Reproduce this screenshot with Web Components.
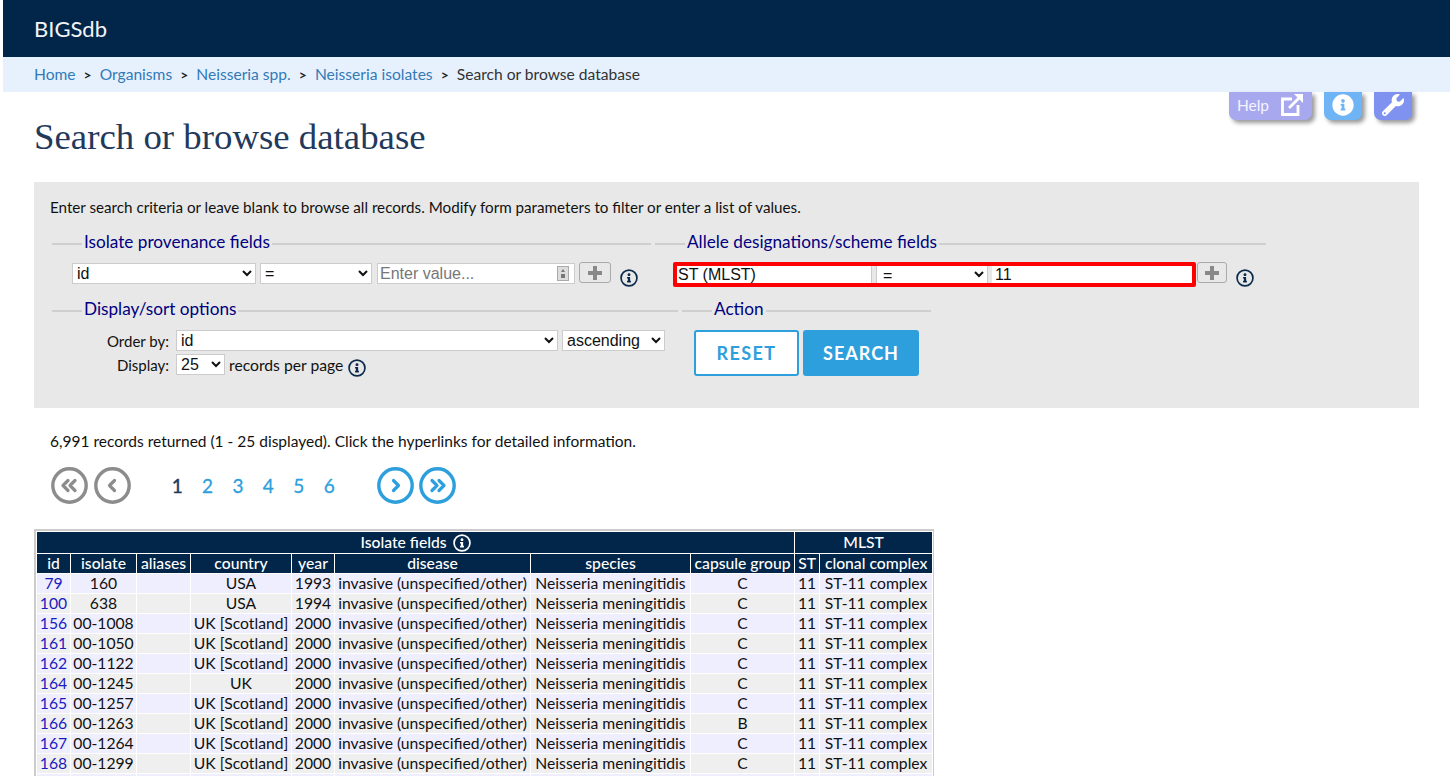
<!DOCTYPE html>
<html lang="en">
<head>
<meta charset="utf-8">
<title>Search or browse database</title>
<style>
  html, body { margin: 0; padding: 0; background: #fff; }
  body { padding: 0 3px; font: 15px Lato, "Noto Sans", sans-serif; color: #111; overflow: hidden; height: 776px; box-sizing: border-box; }
</style>
</head>
<body>
<site-header>BIGSdb</site-header>
<bread-crumbs></bread-crumbs>
<page-main>
  <quick-links></quick-links>
  <h1>Search or browse database</h1>
  <search-form></search-form>
  <p>6,991 records returned (1 - 25 displayed). Click the hyperlinks for detailed information.</p>
  <result-pager></result-pager>
  <result-table></result-table>
</page-main>

<script>
const INFO_I = 'M256 118c23 0 42 19 42 42s-19 42-42 42-42-19-42-42 19-42 42-42zm56 254c0 7-5 12-12 12h-88c-7 0-12-5-12-12v-24c0-7 5-12 12-12h12v-64h-12c-7 0-12-5-12-12v-24c0-7 5-12 12-12h64c7 0 12 5 12 12v100h12c7 0 12 5 12 12v24z'

function infoIcon(size, color) {
  return `<svg width="${size}" height="${size}" viewBox="0 0 512 512"><circle cx="256" cy="256" r="226" fill="none" stroke="${color}" stroke-width="48"/><path fill="${color}" d="${INFO_I}"/></svg>`
}

class SiteHeader extends HTMLElement {
  constructor() {
    super()
    this.attachShadow({ mode: 'open' })
    this.shadowRoot.innerHTML = `
      <style>
        :host { display: flex; align-items: center; height: 57px; padding-left: 31px; background: #02264a; color: #f2f5f8; font-size: 22px; box-sizing: border-box; }
      </style>
      <slot></slot>`
  }
}

class BreadCrumbs extends HTMLElement {
  constructor() {
    super()
    this.attachShadow({ mode: 'open' })
    const links = ['Home', 'Organisms', 'Neisseria spp.', 'Neisseria isolates']
    this.shadowRoot.innerHTML = `
      <style>
        :host { display: flex; align-items: center; box-sizing: border-box; height: 35px; padding: 0 0 1px 31px; background: #e6f1fd; color: #333; font-size: 15.6px; }
        a { color: #337ab7; text-decoration: none; }
        b { font-size: 14px; margin: 0 8px; color: #222; }
        a:first-child { margin-right: -1px; }
      </style>
      ${links.map(l => `<a href="#">${l}</a><b>&gt;</b>`).join('')}<span>Search or browse database</span>`
  }
}

class QuickLinks extends HTMLElement {
  constructor() {
    super()
    this.attachShadow({ mode: 'open' })
    this.shadowRoot.innerHTML = `
      <style>
        :host { position: absolute; top: 0; right: 38px; display: flex; gap: 12px; }
        a { display: flex; align-items: center; justify-content: center; height: 28px; border-radius: 0 0 7px 7px; color: #f4f4ff; text-decoration: none; font-size: 15.5px; box-shadow: 3px 3px 4px #999; }
        .help { width: 83px; background: #a8a8ef; gap: 10px; padding-bottom: 2px; box-sizing: border-box; }
        .info { width: 38px; background: #6fb4f4; padding-bottom: 2px; box-sizing: border-box; }
        .tool { width: 38px; background: #7f92ef; padding-bottom: 2px; box-sizing: border-box; }
      </style>
      <a class="help" href="#">Help
        <svg width="25" height="25" viewBox="0 0 25 25" fill="none" stroke="#fff" stroke-width="2.8">
          <path d="M13 6H3.5v15.5H19V12"/>
          <path d="M10 15 22 3"/>
          <path fill="#fff" stroke="none" d="M15 1h9v9z"/>
        </svg>
      </a>
      <a class="info" href="#" aria-label="Info">
        <svg width="22" height="22" viewBox="0 0 512 512"><circle cx="256" cy="256" r="248" fill="#fff"/><path fill="#6fb4f4" d="${INFO_I}"/></svg>
      </a>
      <a class="tool" href="#" aria-label="Tools">
        <svg width="22" height="22" viewBox="0 0 512 512"><path fill="#fff" d="M507.73 109.1c-2.24-9.03-13.54-12.09-20.12-5.51l-74.36 74.36-67.88-11.31-11.31-67.88 74.36-74.36c6.62-6.62 3.43-17.9-5.66-20.16-47.38-11.74-99.55.91-136.58 37.93-39.64 39.64-50.55 97.1-34.05 147.2L18.74 402.76c-24.99 24.99-24.99 65.51 0 90.5 24.99 24.99 65.51 24.99 90.5 0l213.21-213.21c50.12 16.71 107.47 5.68 147.37-34.22 37.07-37.07 49.7-89.32 37.91-136.73zM64 472c-13.25 0-24-10.75-24-24 0-13.26 10.75-24 24-24s24 10.74 24 24c0 13.25-10.75 24-24 24z"/></svg>
      </a>`
  }
}

class PageMain extends HTMLElement {
  constructor() {
    super()
    this.attachShadow({ mode: 'open' })
    this.shadowRoot.innerHTML = `
      <style>
        :host { display: block; position: relative; padding: 0 31px; }
        ::slotted(h1) { margin: 0; padding-top: 23px; height: 67px; font: 36.85px/44px "Liberation Serif", serif; color: #1f3a5c; }
        ::slotted(p) { margin: 0; padding: 24px 0 0 16px; height: 35px; line-height: 18px; font-size: 15.5px; }
      </style>
      <slot></slot>`
  }
}

class FormFieldset extends HTMLElement {
  constructor() {
    super()
    this.attachShadow({ mode: 'open' })
    this.shadowRoot.innerHTML = `
      <style>
        :host { display: block; }
        .legend { display: flex; align-items: center; gap: 2px; height: 22px; color: #000080; font-size: 17.2px; }
        .legend span { padding-bottom: 2px; }
        .legend i { height: 2px; background: #cfcfcf; flex: 1; margin-top: 4px; }
        .legend i:first-child { flex: 0 0 30px; }
      </style>
      <div class="legend"><i></i><span></span><i></i></div>
      <slot></slot>`
  }

  connectedCallback() {
    this.shadowRoot.querySelector('span').textContent = this.getAttribute('legend')
  }
}

class FieldRow extends HTMLElement {
  constructor() {
    super()
    this.attachShadow({ mode: 'open' })
    const control = 'box-sizing: border-box; height: 21px; margin: 0; font: 16px "Liberation Sans", sans-serif; color: #111; background: #fff; border: 1px solid #ccc; border-radius: 0; padding: 0;'
    this.shadowRoot.innerHTML = `
      <style>
        :host { display: flex; align-items: flex-start; margin-top: 10px; }
        select, input { ${control} }
        input::placeholder { color: #777; }
        .field { width: 184px; }
        .op { width: 112px; margin-left: 4px; }
        .val { position: relative; margin-left: 5px; }
        .val input { width: 198px; display: block; padding-left: 2px; }
        .val svg { position: absolute; right: 6px; top: 3px; }
        .add { box-sizing: border-box; width: 32px; height: 21px; margin: -1px 0 0 4px; background: transparent; border: 1px solid #aaa; border-radius: 3px; display: flex; align-items: center; justify-content: center; padding: 0; }
        .tip { margin: 6px 0 0 9px; line-height: 0; }
        .mark { display: flex; box-sizing: border-box; height: 25px; margin: -1px 0 0 0; border: 4px solid #f00; border-radius: 2px; }
        .mark select { height: 17px; border-width: 0 1px; }
        .mark input { height: 17px; width: 200px; border: 0; padding-left: 3px; }
        .mark .st { appearance: none; width: 195px; border-left: 0; padding-left: 1px; }
        .mark .op { width: 112px; margin-left: 4px; padding-left: 2px; }
        .mark .val { margin-left: 4px; }
        .mark + .add { margin-left: 1px; width: 30px; }
      </style>
      <slot></slot>`
    const marked = this.hasAttribute('marked')
    const add = `<button class="add" aria-label="Add"><svg width="16" height="16" viewBox="0 0 16 16"><path fill="#888" d="M6 1h4v5h5v4h-5v5H6v-5H1V6h5z"/></svg></button>`
    const tip = `<span class="tip">${infoIcon(18, '#0b2a4c')}</span>`
    const ops = `<select class="op"><option>=</option><option>contains</option><option>starts with</option></select>`
    const spin = `<svg width="12" height="15" viewBox="0 0 12 15"><rect x=".5" y=".5" width="11" height="14" fill="#ddd" stroke="#aaa"/><path fill="#777" d="M6 3l2 3H4zM4 8h4v4H4z"/></svg>`
    const html = marked
      ? `<div class="mark"><select class="st"><option>ST (MLST)</option></select>${ops}<div class="val"><input value="11"></div></div>${add}${tip}`
      : `<select class="field"><option>id</option></select>${ops}<div class="val"><input placeholder="Enter value...">${spin}</div>${add}${tip}`
    this.shadowRoot.innerHTML += html
  }
}

class SearchForm extends HTMLElement {
  constructor() {
    super()
    this.attachShadow({ mode: 'open' })
    this.shadowRoot.innerHTML = `
      <style>
        :host { display: block; box-sizing: border-box; height: 226px; padding: 16px 16px 0; background: #e8e8e8; }
        p { margin: 0 0 15px; line-height: 18px; color: #111; font-size: 15.2px; }
        .row { display: flex; gap: 4px; margin-left: 2px; }
        .row + .row { margin-top: 11px; }
        .p1 { width: 599px; } .p2 { width: 611px; } .p3 { width: 626px; } .p4 { width: 249px; }
        .p1 field-row { margin-left: 20px; }
        .p2 field-row { margin-left: 18px; }
        .opts { display: grid; grid-template-columns: 117px auto; column-gap: 7px; row-gap: 3px; margin-top: 10px; align-items: center; }
        label { text-align: right; font-size: 15px; }
        select { box-sizing: border-box; height: 21px; margin: 0; font: 16px "Liberation Sans", sans-serif; color: #111; background: #fff; border: 1px solid #ccc; border-radius: 0; padding: 0; }
        .inline { display: flex; align-items: center; gap: 4px; font-size: 15.7px; }
        .inline svg { margin: 3px 0 -3px 1px; }
        .btns { display: flex; gap: 4px; margin: 10px 0 0 12px; }
        button { box-sizing: border-box; height: 46px; border-radius: 3px; font: bold 18px Lato, sans-serif; letter-spacing: 1.4px; border: 2px solid #2d9fdc; padding: 0; }
        .reset { width: 105px; background: #fff; color: #2d9fdc; }
        .search { width: 116px; background: #2d9fdc; color: #fff; letter-spacing: 1px; }
      </style>
      <p>Enter search criteria or leave blank to browse all records. Modify form parameters to filter or enter a list of values.</p>
      <div class="row">
        <form-fieldset class="p1" legend="Isolate provenance fields"><field-row></field-row></form-fieldset>
        <form-fieldset class="p2" legend="Allele designations/scheme fields"><field-row marked></field-row></form-fieldset>
      </div>
      <div class="row">
        <form-fieldset class="p3" legend="Display/sort options">
          <div class="opts">
            <label>Order by:</label>
            <div class="inline"><select style="width:382px"><option>id</option></select><select style="width:103px"><option>ascending</option><option>descending</option></select></div>
            <label>Display:</label>
            <div class="inline"><select style="width:49px"><option>25</option><option>50</option><option>100</option></select><span>records per page</span>${infoIcon(18, '#0b2a4c')}</div>
          </div>
        </form-fieldset>
        <form-fieldset class="p4" legend="Action">
          <div class="btns"><button class="reset">RESET</button><button class="search">SEARCH</button></div>
        </form-fieldset>
      </div>`
  }
}

class ResultPager extends HTMLElement {
  constructor() {
    super()
    this.attachShadow({ mode: 'open' })
    const round = (color, d, label) => `<a class="round" href="#" aria-label="${label}"><svg width="37" height="37" viewBox="0 0 37 37"><circle cx="18.5" cy="18.5" r="16.7" fill="none" stroke="${color}" stroke-width="3.4"/><path d="${d}" fill="none" stroke="${color}" stroke-width="3.2" stroke-linecap="round" stroke-linejoin="round"/></svg></a>`
    const grey = '#8c8c8c', blue = '#2d9fdc'
    this.shadowRoot.innerHTML = `
      <style>
        :host { display: flex; align-items: center; height: 37px; padding-left: 17px; }
        .round { display: block; height: 37px; margin-right: 6px; }
        .num { width: 30.4px; text-align: center; font-size: 19px; color: ${blue}; text-decoration: none; -webkit-text-stroke: .3px ${blue}; }
        .cur { color: #1f3a5c; -webkit-text-stroke: .4px #1f3a5c; }
        .pages { display: flex; margin: 0 33px 0 25px; }
        .next .round { margin-right: 5px; }
        .group { display: flex; }
      </style>
      <div class="group">
        ${round(grey, 'M17 13.5 12 18.5 17 23.5M24 13.5 19 18.5 24 23.5', 'First')}
        ${round(grey, 'M20.5 13.5 15.5 18.5 20.5 23.5', 'Previous')}
      </div>
      <div class="pages">
        <span class="num cur">1</span>
        ${[2, 3, 4, 5, 6].map(n => `<a class="num" href="#">${n}</a>`).join('')}
      </div>
      <div class="group next">
        ${round(blue, 'M16.5 13.5 21.5 18.5 16.5 23.5', 'Next')}
        ${round(blue, 'M13 13.5 18 18.5 13 23.5M20 13.5 25 18.5 20 23.5', 'Last')}
      </div>`
  }
}

class ResultTable extends HTMLElement {
  constructor() {
    super()
    this.attachShadow({ mode: 'open' })
    const widths = [34, 66, 54, 101, 43, 196, 160, 104, 25, 113]
    const heads = ['id', 'isolate', 'aliases', 'country', 'year', 'disease', 'species', 'capsule group', 'ST', 'clonal complex']
    const rows = [
      ['79', '160', 'USA', '1993', 'C'],
      ['100', '638', 'USA', '1994', 'C'],
      ['156', '00-1008', 'UK [Scotland]', '2000', 'C'],
      ['161', '00-1050', 'UK [Scotland]', '2000', 'C'],
      ['162', '00-1122', 'UK [Scotland]', '2000', 'C'],
      ['164', '00-1245', 'UK', '2000', 'C'],
      ['165', '00-1257', 'UK [Scotland]', '2000', 'C'],
      ['166', '00-1263', 'UK [Scotland]', '2000', 'B'],
      ['167', '00-1264', 'UK [Scotland]', '2000', 'C'],
      ['168', '00-1299', 'UK [Scotland]', '2000', 'C'],
    ]
    const body = rows.map(r => `<tr>
        <td><a href="#">${r[0]}</a></td><td>${r[1]}</td><td></td><td>${r[2]}</td><td>${r[3]}</td>
        <td>invasive (unspecified/other)</td><td>Neisseria meningitidis</td><td>${r[4]}</td><td>11</td><td>ST-11 complex</td>
      </tr>`).join('')
    this.shadowRoot.innerHTML = `
      <style>
        :host { display: block; box-sizing: border-box; width: 900px; margin-top: 25px; border: 2px solid #ccc; }
        table { table-layout: fixed; width: 896px; border-collapse: collapse; font-size: 15.7px; }
        th, td { border: 1px solid #fff; height: 19px; padding: 0; text-align: center; white-space: nowrap; overflow: hidden; line-height: 19px; }
        th { background: #02264a; color: #fff; font-weight: 500; }
        .top th { height: 20px; padding-bottom: 1px; }
        tbody tr:nth-child(odd) td { background: #eeeeff; }
        tbody tr:nth-child(even) td { background: #efefef; }
        a { color: #1a1ac0; text-decoration: none; }
        th svg { vertical-align: -4px; margin-left: 2px; }
      </style>
      <table>
        <colgroup>${widths.map(w => `<col style="width:${w}px">`).join('')}</colgroup>
        <thead>
          <tr class="top"><th colspan="8">Isolate fields ${infoIcon(18, '#fff')}</th><th colspan="2">MLST</th></tr>
          <tr>${heads.map(h => `<th>${h}</th>`).join('')}</tr>
        </thead>
        <tbody>${body}<tr>${widths.map(() => '<td></td>').join('')}</tr></tbody>
      </table>`
  }
}

customElements.define('site-header', SiteHeader)
customElements.define('bread-crumbs', BreadCrumbs)
customElements.define('quick-links', QuickLinks)
customElements.define('page-main', PageMain)
customElements.define('form-fieldset', FormFieldset)
customElements.define('field-row', FieldRow)
customElements.define('search-form', SearchForm)
customElements.define('result-pager', ResultPager)
customElements.define('result-table', ResultTable)
</script>
</body>
</html>
